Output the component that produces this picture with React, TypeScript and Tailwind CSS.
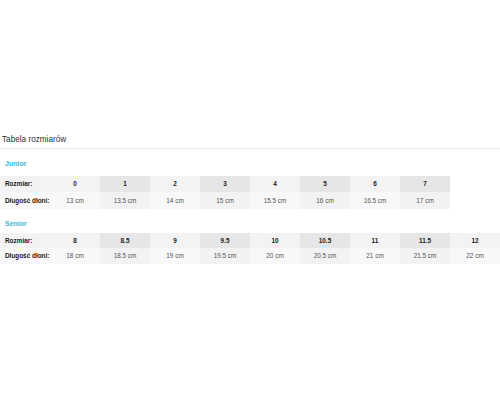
import React from "react";

const junior = [
    { size: "0", len: "13 cm" },
    { size: "1", len: "13.5 cm" },
    { size: "2", len: "14 cm" },
    { size: "3", len: "15 cm" },
    { size: "4", len: "15.5 cm" },
    { size: "5", len: "16 cm" },
    { size: "6", len: "16.5 cm" },
    { size: "7", len: "17 cm" },
];

const senior = [
    { size: "8", len: "18 cm" },
    { size: "8.5", len: "18.5 cm" },
    { size: "9", len: "19 cm" },
    { size: "9.5", len: "19.5 cm" },
    { size: "10", len: "20 cm" },
    { size: "10.5", len: "20.5 cm" },
    { size: "11", len: "21 cm" },
    { size: "11.5", len: "21.5 cm" },
    { size: "12", len: "22 cm" },
];

const SizeTable: React.FC<{ rows: { size: string; len: string }[]; tall?: boolean }> = ({ rows, tall }) => {
    const h = tall ? "h-[16px]" : "h-[15px]";
    const h2 = tall ? "h-[17px]" : "h-[16px]";
    return (
        <div className="flex">
            <div className="w-[50px] shrink-0">
                <div className={`${h} flex items-center bg-[#f3f3f3] pl-[5px] text-[6.4px] font-bold text-[#222]`}>Rozmiar:</div>
                <div className={`${h2} flex items-center bg-[#f8f8f8] pl-[5px] text-[6.4px] font-bold text-[#222]`}>
                    Długość dłoni:
                </div>
            </div>
            {rows.map((r, i) => (
                <div key={r.size} className="w-[50px] shrink-0">
                    <div className={`${h} flex items-center justify-center text-[6.4px] font-bold text-[#222] ${i % 2 ? "bg-[#e7e6e7]" : "bg-[#f3f3f3]"}`}>
                        {r.size}
                    </div>
                    <div className={`${h2} flex items-center justify-center text-[6.4px] text-[#555] ${i % 2 ? "bg-[#f2f2f2]" : "bg-[#f8f8f8]"}`}>
                        {r.len}
                    </div>
                </div>
            ))}
        </div>
    );
};

export default function App() {
    return (
        <div className="h-[400px] w-[500px] bg-white pt-[135px]" style={{ fontFamily: '"Liberation Sans", Arial, sans-serif' }}>
            <div className="border-b border-[#e6e6e6] pb-[3px] pl-[2px] text-[8.2px] leading-[10px] text-[#333]">Tabela rozmiarów</div>
            <div className="mt-[10px] pl-[5px] text-[7px] font-bold leading-[9px] text-[#3bb4d2]">Junior</div>
            <div className="mt-[8px]">
                <SizeTable rows={junior} tall />
            </div>
            <div className="mt-[10px] pl-[5px] text-[7px] font-bold leading-[9px] text-[#3bb4d2]">Senior</div>
            <div className="mt-[5px]">
                <SizeTable rows={senior} />
            </div>
        </div>
    );
}
